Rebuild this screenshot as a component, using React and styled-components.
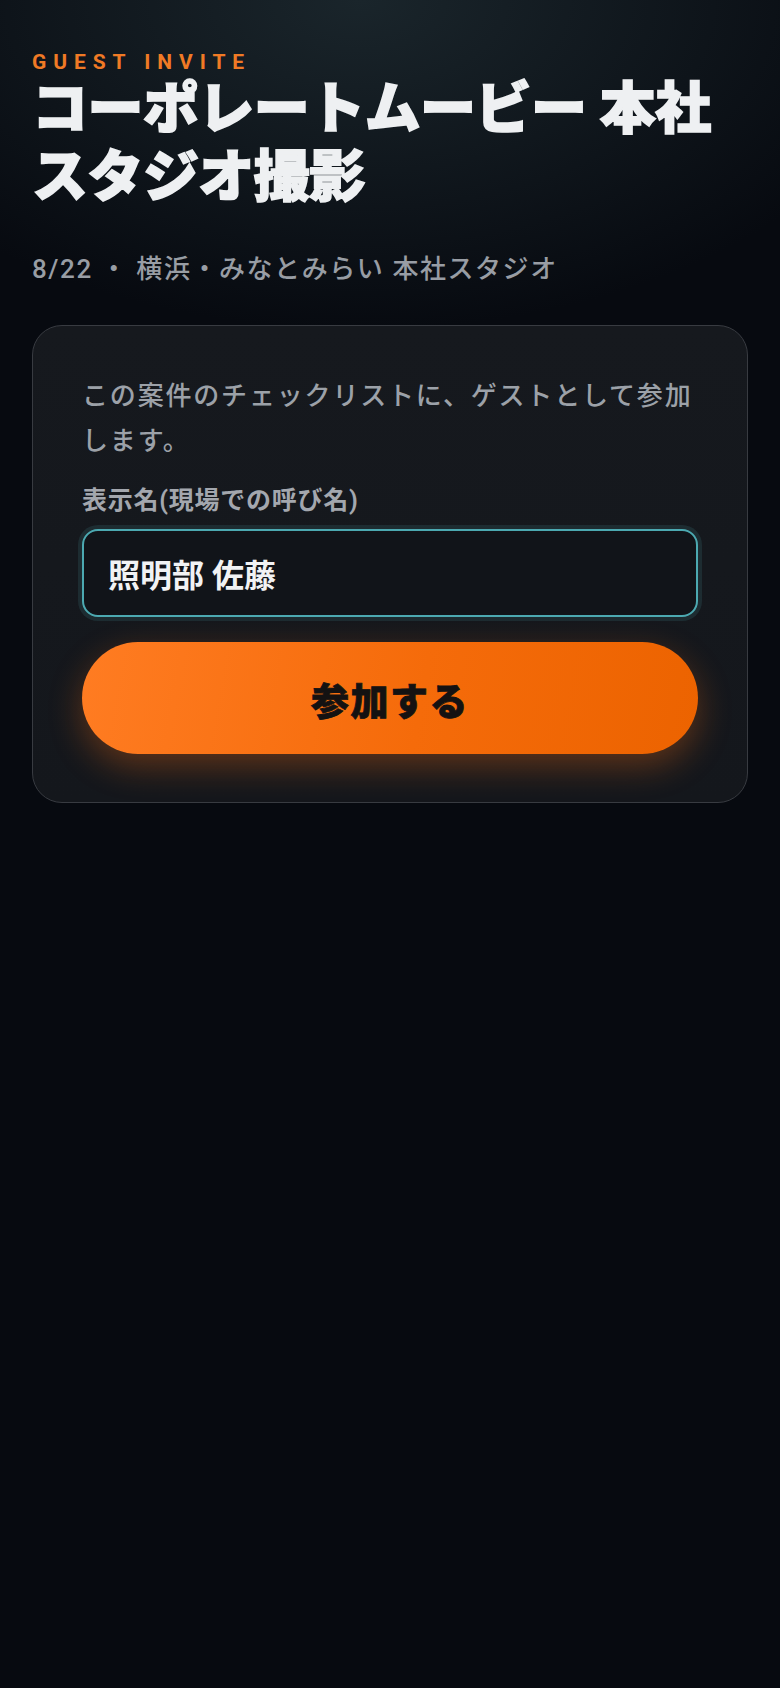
import styled, { createGlobalStyle } from 'styled-components';

const GlobalStyle = createGlobalStyle`
  html, body {
    margin: 0;
    padding: 0;
    background: #070a10;
  }
  * {
    box-sizing: border-box;
  }
  body {
    font-family: Roboto, "Noto Sans CJK JP", "Noto Sans", sans-serif;
    -webkit-font-smoothing: antialiased;
  }
`;

const Page = styled.main`
  min-height: 1688px;
  padding: 50px 32px 0;
  background:
    radial-gradient(ellipse 560px 330px at 360px 0px, rgba(28, 40, 46, 0.9), rgba(28, 40, 46, 0) 100%),
    #070a10;
`;

const Eyebrow = styled.p`
  margin: 0;
  font-size: 21px;
  line-height: 25px;
  font-weight: 700;
  letter-spacing: 0.33em;
  color: #f07a25;
`;

const Title = styled.h1`
  margin: 0;
  font-size: 56px;
  line-height: 68px;
  font-weight: 900;
  letter-spacing: -0.01em;
  color: #eef0f2;
  -webkit-text-stroke: 1.6px #eef0f2;
`;

const Meta = styled.p`
  margin: 40px 0 0;
  font-size: 26px;
  line-height: 36px;
  font-weight: 500;
  letter-spacing: 0.06em;
  color: #989da4;
`;

const Card = styled.section`
  margin-top: 38px;
  display: flex;
  flex-direction: column;
  padding: 48px 49px 48px;
  border: 1px solid #383b41;
  border-radius: 30px;
  background: linear-gradient(180deg, #16191e 0%, #14171c 100%);
`;

const Lead = styled.p`
  margin: 0;
  font-size: 26px;
  line-height: 45px;
  font-weight: 500;
  letter-spacing: 0.07em;
  color: #9ca1a8;
`;

const Label = styled.label`
  margin-top: 20px;
  font-size: 25px;
  line-height: 34px;
  font-weight: 700;
  letter-spacing: 0.03em;
  color: #a3a7ae;
`;

const NameInput = styled.input`
  margin-top: 11px;
  height: 88px;
  width: 100%;
  padding: 0 24px;
  border: 2px solid #4ca9b1;
  border-radius: 16px;
  background: #111419;
  box-shadow: 0 0 0 4px rgba(76, 169, 177, 0.14);
  font-family: inherit;
  font-size: 32px;
  font-weight: 700;
  color: #f1f2f4;
  outline: none;
`;

const JoinButton = styled.button`
  margin-top: 25px;
  height: 112px;
  width: 100%;
  border: none;
  border-radius: 56px;
  background: linear-gradient(100deg, #ff7c22 0%, #f56b0a 55%, #ec6300 100%);
  box-shadow: 0 12px 34px rgba(255, 112, 20, 0.32);
  font-family: inherit;
  font-size: 38px;
  font-weight: 900;
  letter-spacing: 0.04em;
  color: #141212;
  -webkit-text-stroke: 0.8px #141212;
  cursor: pointer;
`;

export default function App() {
  return (
    <>
      <GlobalStyle />
      <Page>
        <Eyebrow>GUEST INVITE</Eyebrow>
        <Title>コーポレートムービー 本社スタジオ撮影</Title>
        <Meta>8/22 ・ 横浜・みなとみらい 本社スタジオ</Meta>
        <Card>
          <Lead>この案件のチェックリストに、ゲストとして参加します。</Lead>
          <Label htmlFor="display-name">表示名(現場での呼び名)</Label>
          <NameInput id="display-name" defaultValue="照明部 佐藤" />
          <JoinButton type="button">参加する</JoinButton>
        </Card>
      </Page>
    </>
  );
}
